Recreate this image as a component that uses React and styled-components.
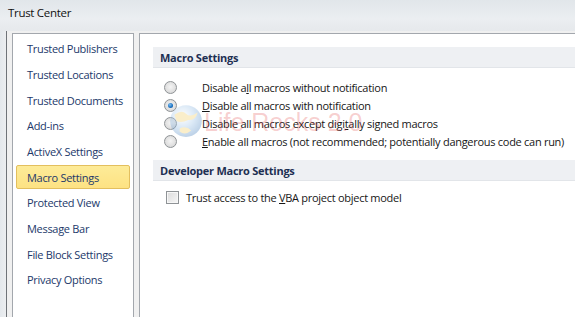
import React from "react";
import styled, { createGlobalStyle } from "styled-components";

const Global = createGlobalStyle`
  html, body { margin: 0; padding: 0; background: #f0f0f0; }
  body { font-family: "Open Sans", "Noto Sans", sans-serif; }
`;

const Window = styled.div`
  width: 575px;
  height: 317px;
  overflow: hidden;
  display: flex;
  flex-direction: column;
  background: linear-gradient(90deg, #e4e8ec 0px, #eceef0 6px);
  position: relative;
`;

const TitleBar = styled.div`
  height: 31px;
  flex: none;
  display: flex;
  align-items: flex-start;
  padding: 5px 0 0 8px;
  box-sizing: border-box;
  background: linear-gradient(180deg, #e1e6ea 0%, #ebeef1 60%, #e6e9ec 100%);
  font-size: 11.5px;
  letter-spacing: -0.3px;
  color: #111;
`;

const Client = styled.div`
  flex: 1;
  margin-left: 6px;
  border-left: 1px solid #6f7378;
  background: #f0f0f0;
  display: flex;
  padding: 2px 0 0 5px;
  gap: 5px;
  min-height: 0;
`;

const NavPanel = styled.div`
  width: 120px;
  flex: none;
  background: #fff;
  border: 1px solid #a3a7ad;
  border-bottom: none;
  padding-top: 2px;
  box-sizing: content-box;
`;

const NavItem = styled.div`
  height: ${(p) => (p.$active ? "24px" : "25.67px")};
  margin: ${(p) => (p.$active ? "0.83px 3px" : "0 3px")};
  box-sizing: border-box;
  display: flex;
  align-items: center;
  padding-left: 10px;
  font-size: 11px;
  letter-spacing: -0.3px;
  color: #22386a;
  border-radius: 2px;
  border: 1px solid ${(p) => (p.$active ? "#e3bf5e" : "transparent")};
  background: ${(p) =>
    p.$active ? "linear-gradient(180deg, #fdeb98 0%, #fde283 100%)" : "transparent"};
  white-space: nowrap;
`;

const ContentPanel = styled.div`
  flex: 1;
  background: #fff;
  border: 1px solid #a3a7ad;
  border-right: none;
  border-bottom: none;
  padding: 13px 0 0 13px;
  position: relative;
  overflow: hidden;
`;

const SectionHeader = styled.div`
  height: 20px;
  box-sizing: content-box;
  background: #eef0f3;
  border-bottom: 1px solid #e2e5e9;
  display: flex;
  align-items: center;
  padding-left: 7px;
  font-size: 11px;
  letter-spacing: -0.25px;
  font-weight: 700;
  color: #1d2f52;
  margin-top: ${(p) => p.$mt || 0}px;
`;

const OptionList = styled.div`
  display: flex;
  flex-direction: column;
  padding: ${(p) => p.$pad};
`;

const OptionRow = styled.label`
  height: 18px;
  display: flex;
  align-items: center;
  font-size: 11px;
  letter-spacing: -0.28px;
  color: #161616;
  white-space: nowrap;
`;

const Radio = styled.span`
  width: 11px;
  height: 11px;
  flex: none;
  border-radius: 50%;
  border: 1px solid #8f9396;
  background: radial-gradient(circle at 50% 45%, #f4f4f4 0%, #dcdcdc 70%, #c9c9c9 100%);
  margin-right: 25px;
  display: flex;
  align-items: center;
  justify-content: center;
  &::after {
    content: "";
    width: 5px;
    height: 5px;
    border-radius: 50%;
    display: ${(p) => (p.$checked ? "block" : "none")};
    background: radial-gradient(circle at 40% 35%, #7ec0f2 0%, #1a6fc0 60%, #0d4d92 100%);
  }
`;

const Check = styled.span`
  width: 11px;
  height: 11px;
  flex: none;
  border: 1px solid #8f9396;
  background: linear-gradient(135deg, #dcdcdc 0%, #f6f6f6 100%);
  box-shadow: inset 0 0 0 1px #f7f7f7;
  margin-right: 7px;
`;

const Watermark = styled.div`
  position: absolute;
  left: 29px;
  top: 67px;
  display: flex;
  align-items: center;
  gap: 1px;
  pointer-events: none;
`;

const WatermarkText = styled.span`
  font-family: "Liberation Sans", sans-serif;
  font-size: 25px;
  color: rgba(225, 70, 70, 0.26);
  white-space: nowrap;
  margin-top: 4px;
`;

const Globe = () => (
  <svg width="34" height="38" viewBox="0 0 32 36" style={{ opacity: 0.35 }}>
    <defs>
      <radialGradient id="g" cx="40%" cy="35%" r="65%">
        <stop offset="0%" stopColor="#ffffff" />
        <stop offset="55%" stopColor="#9cc3e8" />
        <stop offset="100%" stopColor="#4a84c0" />
      </radialGradient>
    </defs>
    <circle cx="16" cy="19" r="15" fill="url(#g)" />
    <path d="M5 13 Q12 8 16 12 T27 11 Q25 19 18 18 Q12 21 7 19 Z" fill="#f2cf6b" />
    <path d="M10 26 Q16 23 21 28 Q15 33 10 29 Z" fill="#f2cf6b" />
  </svg>
);

const navItems = [
  "Trusted Publishers",
  "Trusted Locations",
  "Trusted Documents",
  "Add-ins",
  "ActiveX Settings",
  "Macro Settings",
  "Protected View",
  "Message Bar",
  "File Block Settings",
  "Privacy Options",
];

export default function App() {
  return (
    <>
      <Global />
      <Window>
        <TitleBar>Trust Center</TitleBar>
        <Client>
          <NavPanel>
            {navItems.map((n) => (
              <NavItem key={n} $active={n === "Macro Settings"}>
                {n}
              </NavItem>
            ))}
          </NavPanel>
          <ContentPanel>
            <SectionHeader>Macro Settings</SectionHeader>
            <OptionList $pad="10px 0 0 11px">
              <OptionRow>
                <Radio />
                <span>
                  Disable a<u>l</u>l macros without notification
                </span>
              </OptionRow>
              <OptionRow>
                <Radio $checked />
                <span>
                  <u>D</u>isable all macros with notification
                </span>
              </OptionRow>
              <OptionRow>
                <Radio />
                <span>
                  Disable all macros except digi<u>t</u>ally signed macros
                </span>
              </OptionRow>
              <OptionRow>
                <Radio />
                <span>
                  <u>E</u>nable all macros (not recommended; potentially dangerous code can run)
                </span>
              </OptionRow>
            </OptionList>
            <SectionHeader $mt={10}>Developer Macro Settings</SectionHeader>
            <OptionList $pad="7px 0 0 13px">
              <OptionRow>
                <Check />
                <span>
                  Trust access to the <u>V</u>BA project object model
                </span>
              </OptionRow>
            </OptionList>
            <Watermark>
              <Globe />
              <WatermarkText>Life Rocks 2.0</WatermarkText>
            </Watermark>
          </ContentPanel>
        </Client>
      </Window>
    </>
  );
}
